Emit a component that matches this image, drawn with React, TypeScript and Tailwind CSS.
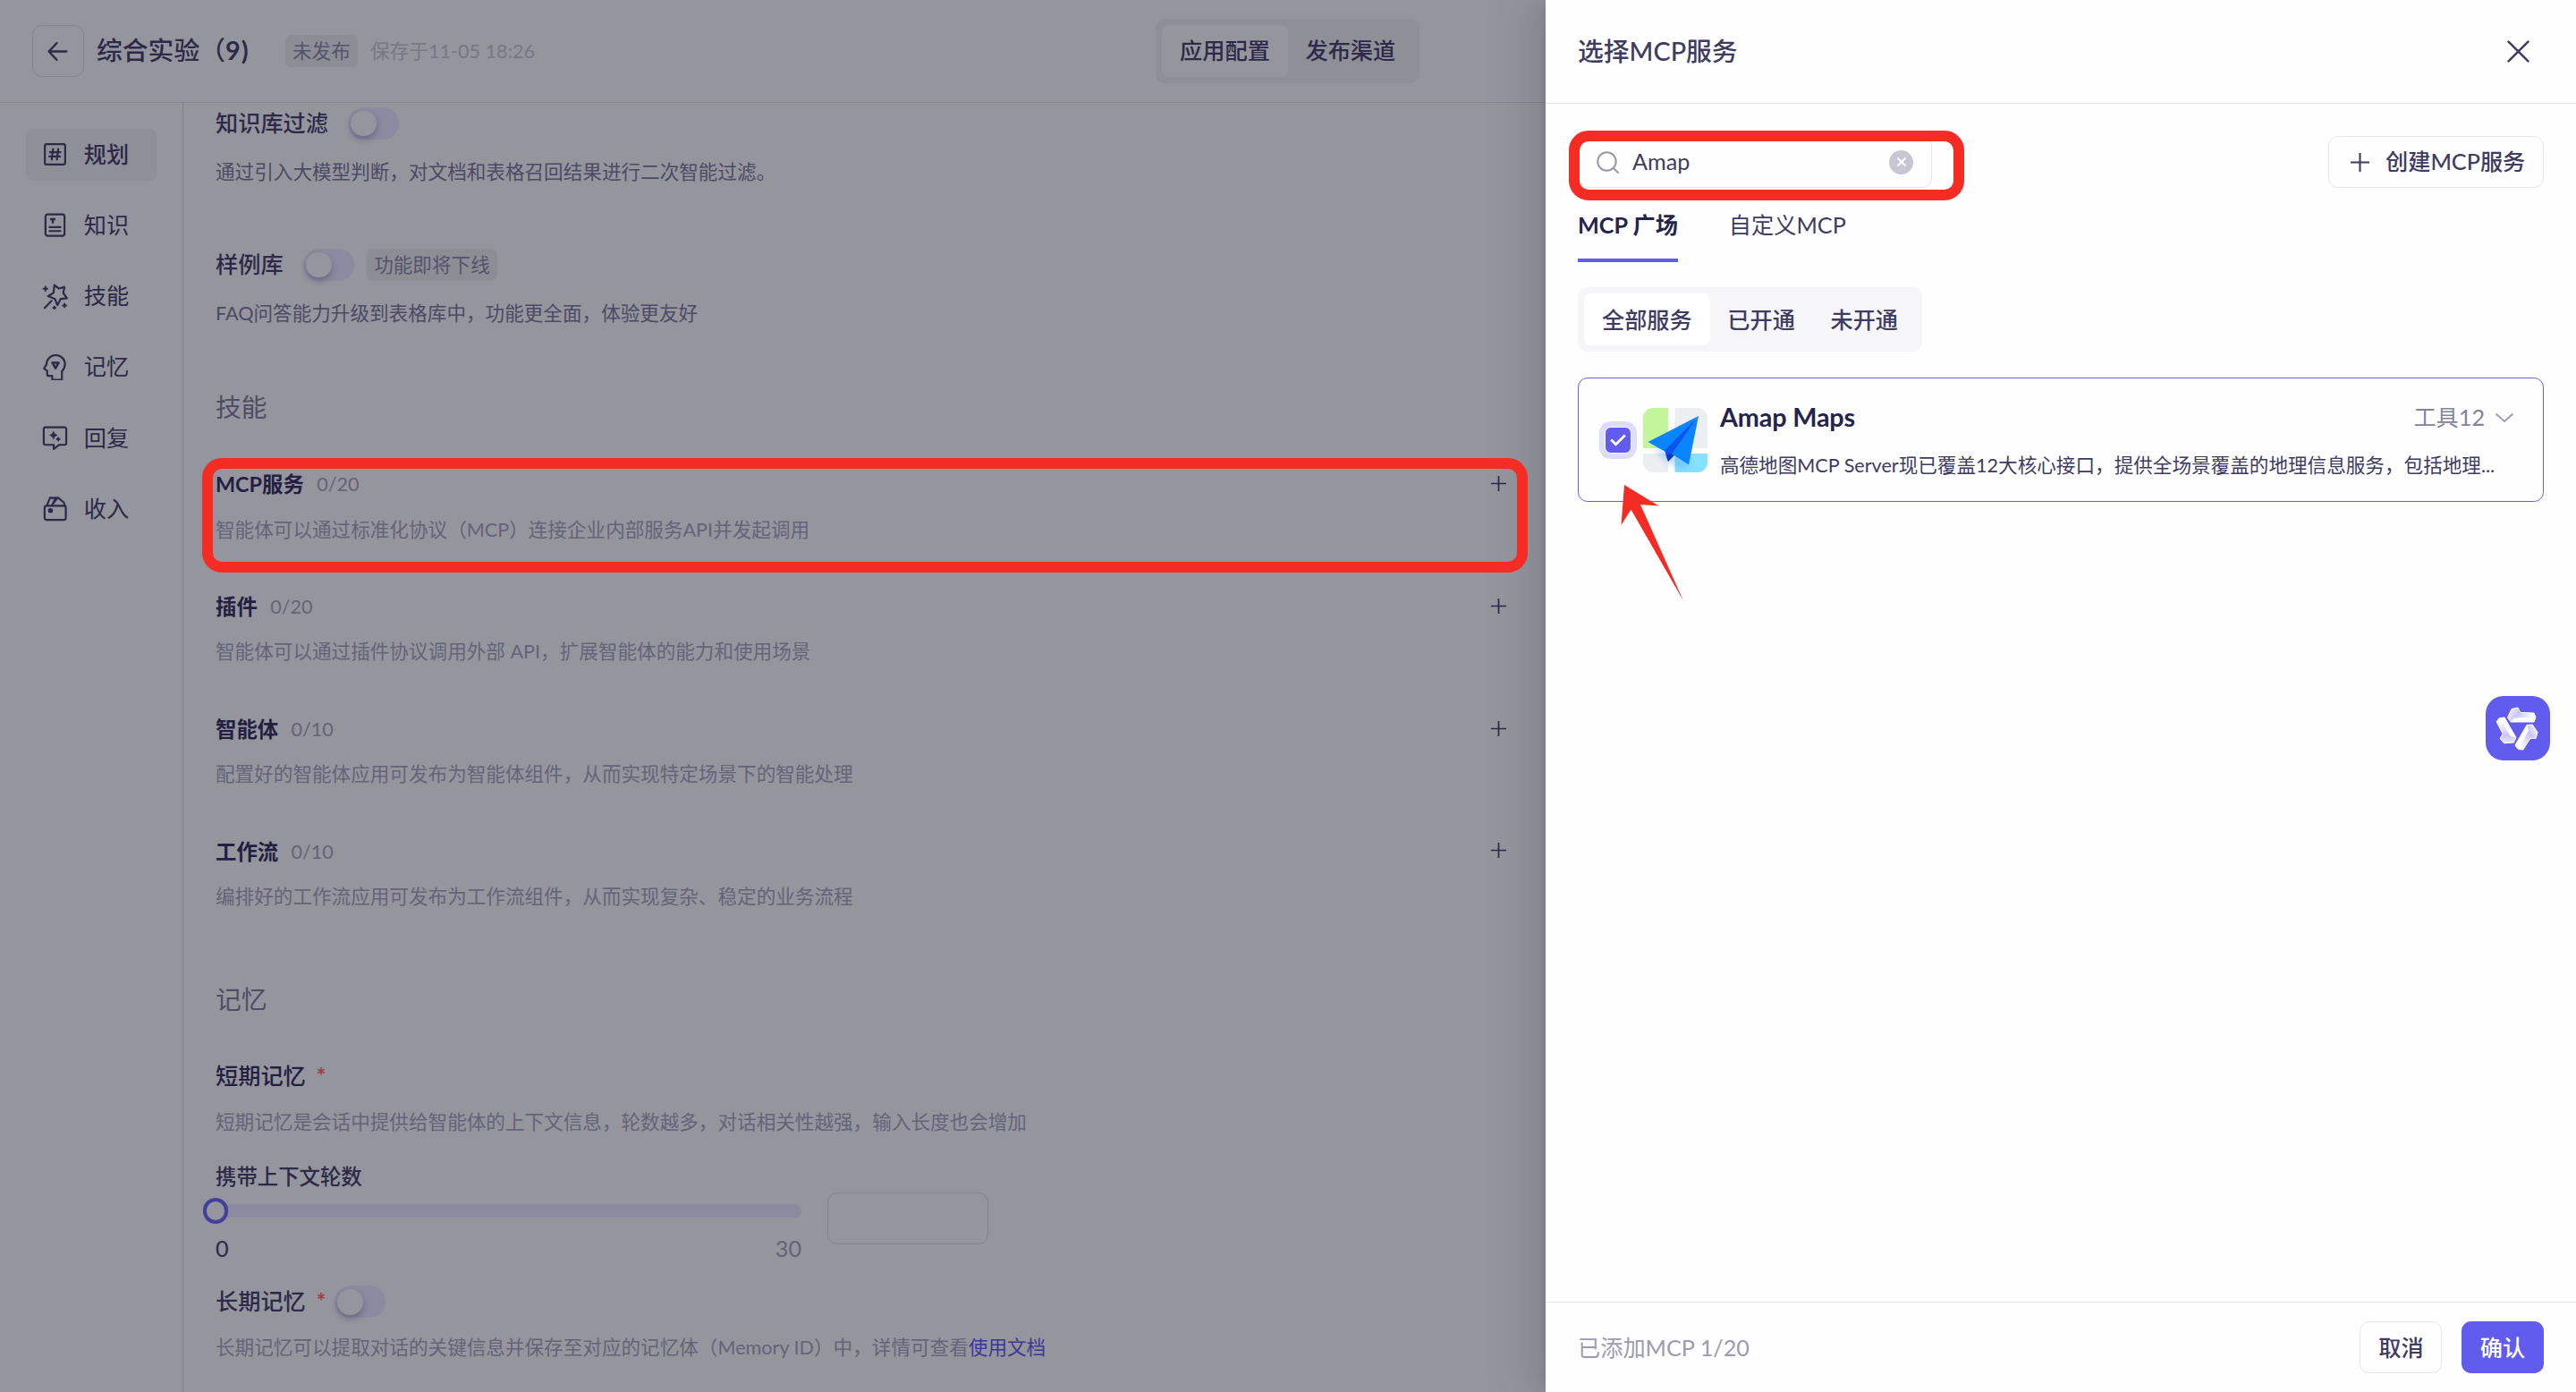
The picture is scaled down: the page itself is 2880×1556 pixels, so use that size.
import React from 'react';
import clsx from 'clsx';

// Sidebar icons, all on a 24 grid
const iconProps = {
  viewBox: '0 0 24 24',
  fill: 'none',
  stroke: 'currentColor',
  strokeWidth: 1.8,
  strokeLinecap: 'round' as const,
  strokeLinejoin: 'round' as const,
  className: 'size-[29px] shrink-0',
};

const PlanIcon = () => (
  <svg {...iconProps}>
    <rect x="2.6" y="2.6" width="18.8" height="18.8" rx="1.6" />
    <path d="M10.2 7.2 9 16.8M15 7.2l-1.2 9.6M7.2 10h9.8M6.8 14h9.8" />
  </svg>
);

const KnowledgeIcon = () => (
  <svg {...iconProps}>
    <rect x="3.2" y="2.2" width="17.6" height="19.8" rx="2" />
    <path d="M7.4 6.6h5M9.9 6.6v4" strokeWidth={2} strokeLinecap="butt" />
    <path d="M7 14h10M7 17.6h10" />
  </svg>
);

const SkillIcon = () => (
  <svg {...iconProps}>
    <path d="m11.4 1.400 4.200 3.200 5.200-1.400-1.200 5.400 3.400 5-5.800.6-3 5.800-2.200-5.800L5.600 11.600l5-3z" />
    <path d="m8.800 16-6.400 6.600" />
    <path d="M3.200 3v3.600M1.400 4.800h3.600M20.800 18.600v3.200M19.200 20.200h3.200M11.400 21.400v2M10.400 22.400h2" strokeWidth={1.7} />
  </svg>
);

const MemoryIcon = () => (
  <svg {...iconProps}>
    <path d="M18.4 23.6H9.400v-3.600H5.800a1 1 0 0 1-1-1v-3.600L1.800 13.200l2.200-3.600C4.200 4.400 8 .8 12.600.8c4.900 0 8.600 3.600 8.600 8.400 0 3.200-1.200 5-2.800 6.600z" />
    <path d="M9.600 7.800h5.800L12.500 13z" strokeWidth={2.100} />
  </svg>
);

const ReplyIcon = () => (
  <svg {...iconProps}>
    <path d="M3 2.200h18a1.400 1.400 0 0 1 1.400 1.400v13.400a1.400 1.400 0 0 1-1.400 1.400h-5l-5.200 3.800v-3.800H3a1.400 1.400 0 0 1-1.400-1.400V3.600A1.400 1.400 0 0 1 3 2.200z" />
    <path d="M10.600 6.200c.3 2.200 1 2.900 3.200 3.300-2.200.4-2.900 1.100-3.200 3.300-.3-2.200-1-2.900-3.200-3.300 2.200-.4 2.900-1.100 3.200-3.300zM15 11.400c.2 1.200.5 1.500 1.700 1.700-1.200.2-1.500.5-1.700 1.700-.2-1.200-.5-1.500-1.700-1.700 1.200-.2 1.500-.5 1.700-1.700z" fill="currentColor" strokeWidth={1} />
  </svg>
);

const IncomeIcon = () => (
  <svg {...iconProps}>
    <rect x="2.400" y="9.400" width="19.600" height="13" rx="1.800" />
    <path d="m4.600 9 2.800-7 4.200.2M9 9l5.600-7.200L20.200 6.400l1 3.200M9.200 9l3.600-7.200" />
    <circle cx="7.800" cy="13.800" r="1.400" fill="currentColor" />
  </svg>
);

const menu = [
  { label: '规划', icon: PlanIcon, active: true },
  { label: '知识', icon: KnowledgeIcon },
  { label: '技能', icon: SkillIcon },
  { label: '记忆', icon: MemoryIcon },
  { label: '回复', icon: ReplyIcon },
  { label: '收入', icon: IncomeIcon },
];

const skills = [
  { name: 'MCP服务', count: '0/20', desc: '智能体可以通过标准化协议（MCP）连接企业内部服务API并发起调用' },
  { name: '插件', count: '0/20', desc: '智能体可以通过插件协议调用外部 API，扩展智能体的能力和使用场景' },
  { name: '智能体', count: '0/10', desc: '配置好的智能体应用可发布为智能体组件，从而实现特定场景下的智能处理' },
  { name: '工作流', count: '0/10', desc: '编排好的工作流应用可发布为工作流组件，从而实现复杂、稳定的业务流程' },
];

function Toggle() {
  return (
    <span className="flex h-9 w-[57.6px] shrink-0 items-center rounded-full bg-[#8c8aa0] pl-[3.6px]">
      <span className="size-[28.8px] rounded-full bg-[#95959e] shadow-[0_4px_7px_rgba(30,28,70,0.3)]" />
    </span>
  );
}

function Plus({ className }: { className?: string }) {
  return (
    <svg viewBox="0 0 20 20" fill="none" stroke="currentColor" strokeWidth="2" className={clsx('shrink-0', className)}>
      <path d="M10 0v20M0 10h20" />
    </svg>
  );
}

function Tag({ children }: { children: React.ReactNode }) {
  return (
    <span className="flex h-9 items-center rounded-[7px] bg-[#8d8d96] px-2 text-[21.6px] text-[#55536c]">{children}</span>
  );
}

function AmapLogo() {
  return (
    <svg viewBox="0 0 72 72" className="size-[72px] shrink-0">
      <defs>
        <clipPath id="amap-clip">
          <rect width="72" height="72" rx="11" />
        </clipPath>
        <filter id="amap-blur">
          <feGaussianBlur stdDeviation="3" />
        </filter>
      </defs>
      <g clipPath="url(#amap-clip)">
        <rect width="72" height="72" fill="#ffffff" />
        <rect width="28" height="45" fill="#c3f59b" />
        <rect x="35.500" width="37" height="45" fill="#eceff1" />
        <rect y="51" width="28" height="21" fill="#eceff1" />
        <rect x="35.500" y="51" width="37" height="21" fill="#86e0ff" />
        <path d="M10 44 30 50l24 14-10 4-18-8z" fill="#5f9fe8" opacity="0.4" filter="url(#amap-blur)" />
      </g>
      <path d="M62 9 5.500 38 24 48.500z" fill="#0a84ff" />
      <path d="M62 9 31.500 51 51 63.500z" fill="#0a84ff" />
      <path d="M62 9 24 47.500 28 60 32 51.500z" fill="#0a55f0" />
      <path d="m28 60-2.500-8L31.500 51l3.500 2z" fill="#0838c8" />
    </svg>
  );
}

function AssistantLogo() {
  return (
    <svg viewBox="0 0 72 72" className="size-[72px]">
      <defs>
        <linearGradient id="blade" x1="0" y1="0" x2="1" y2="0.300">
          <stop offset="0" stopColor="#ffffff" />
          <stop offset="0.450" stopColor="#c9c5f7" />
          <stop offset="1" stopColor="#ffffff" />
        </linearGradient>
      </defs>
      {[0, 120, 240].map((deg) => (
        <g key={deg} transform={`rotate(${deg} 36 36)`}>
          <path d="M24.500 24 29 14.500 36 13l3 5.400 15 .6 2 4.700-2 5.300H28z" fill="url(#blade)" stroke="#fff" strokeWidth="1" strokeLinejoin="round" />
          <path d="m28 29 4-4.500 23.600-.4L54 29z" fill="#ffffff" />
        </g>
      ))}
    </svg>
  );
}

function TopBar() {
  return (
    <header className="flex h-[115px] items-center border-b border-[#83839a] pl-9">
      <button className="flex size-[57.6px] items-center justify-center rounded-[10.8px] border border-[#85858f]">
        <svg viewBox="0 0 24 24" fill="none" stroke="currentColor" strokeWidth="2.200" strokeLinecap="round" strokeLinejoin="round" className="size-[25px]">
          <path d="M21.500 12H2.800M11 3 2.500 12l8.500 9" />
        </svg>
      </button>
      <h1 className="ml-[14.400px] w-[211px] whitespace-nowrap text-[28.8px] font-medium">
        综合实验（<span className="font-bold tracking-[1px]">9)</span>
      </h1>
      <Tag>未发布</Tag>
      <span className="ml-[14.400px] text-[21.6px] text-[#777786]">保存于11-05 18:26</span>
      <div className="ml-[694px] flex h-[72px] items-center rounded-[10.8px] bg-[#8f8f98] px-[7.2px] text-[25.2px] font-medium">
        <span className="flex h-[57.6px] items-center rounded-[8px] bg-[#95959e] px-[19.8px]">应用配置</span>
        <span className="px-[19.8px]">发布渠道</span>
      </div>
    </header>
  );
}

function SideMenu() {
  return (
    <nav className="flex w-[205px] shrink-0 flex-col gap-[21.6px] border-r border-[#83838f] pl-[28.8px] pt-[29px]">
      {menu.map(({ label, icon: Icon, active }) => (
        <div
          key={label}
          className={clsx(
            'flex h-[57.6px] w-[146px] items-center gap-[18px] rounded-[8px] pl-[18px] text-[25.2px]',
            active && 'bg-[#8f8f98] font-medium'
          )}
        >
          <Icon />
          {label}
        </div>
      ))}
    </nav>
  );
}

function Config() {
  return (
    <section className="flex grow flex-col overflow-hidden pl-[36px] pr-[44px] pt-[5px] text-[21.6px] text-[#656379]">
      <div className="flex h-9 items-center gap-[21.6px] text-[25.2px] font-medium text-[#2c2949]">
        知识库过滤
        <Toggle />
      </div>
      <p className="mt-[18px] h-9 leading-9 text-[#4c4a65]">通过引入大模型判断，对文档和表格召回结果进行二次智能过滤。</p>

      <div className="mt-[68px] flex h-9 items-center text-[25.2px] font-medium text-[#2c2949]">
        <span className="mr-[22px]">样例库</span>
        <Toggle />
        <span className="ml-[14px] font-normal"><Tag>功能即将下线</Tag></span>
      </div>
      <p className="mt-[18px] h-9 leading-9 text-[#4c4a65]">FAQ问答能力升级到表格库中，功能更全面，体验更友好</p>

      <h2 className="mb-[49px] mt-[67px] h-10 text-[28.8px] leading-10 text-[#4f4d67]">技能</h2>

      {skills.map((item) => (
        <div key={item.name} className="h-[136.800px] shrink-0">
          <div className="flex h-9 items-center">
            <span className="text-[23.4px] font-bold text-[#231f42]">{item.name}</span>
            <span className="-mt-px ml-[14.400px]">{item.count}</span>
            <Plus className="mb-[3px] ml-auto size-[17px] text-[#2c2949]" />
          </div>
          <p className="mt-[13.500px] h-9 leading-9">{item.desc}</p>
        </div>
      ))}

      <h2 className="mt-[26px] h-10 text-[28.8px] leading-10 text-[#4f4d67]">记忆</h2>

      <div className="mt-12 flex h-9 items-center text-[25.2px] font-medium text-[#231f42]">
        短期记忆
        <span className="ml-[12px] w-[9px] text-[25.2px] font-bold text-[#a23a48]">*</span>
      </div>
      <p className="mt-[15px] h-9 leading-9">短期记忆是会话中提供给智能体的上下文信息，轮数越多，对话相关性越强，输入长度也会增加</p>

      <div className="mt-[25px] h-9 text-[23.4px] font-medium leading-9 text-[#2c2949]">携带上下文轮数</div>
      <div className="flex h-[104px] gap-[29px]">
        <div className="w-[655px] pt-[13px]">
          <div className="relative h-[14.400px] rounded-full bg-[#8c8aa0]">
            <span className="absolute -left-[14.400px] -top-[7.2px] size-[28.8px] rounded-full border-4 border-[#42409c] bg-[#95959e]" />
          </div>
          <div className="mt-[17px] flex h-[34px] justify-between text-[25.2px] leading-[34px]">
            <span className="text-[#2c2949]">0</span>
            <span>30</span>
          </div>
        </div>
        <div className="h-[57.6px] w-[180px] rounded-[10.8px] border border-[#85858f]" />
      </div>

      <div className="flex h-9 items-center text-[25.2px] font-medium text-[#2c2949]">
        长期记忆
        <span className="ml-[12px] mr-[11px] w-[9px] text-[25.2px] font-bold text-[#a23a48]">*</span>
        <Toggle />
      </div>
      <p className="mt-[15px] h-9 whitespace-nowrap leading-9">
        长期记忆可以提取对话的关键信息并保存至对应的记忆体（Memory ID）中，详情可查看<a className="text-[#3b3894]">使用文档</a>
      </p>
    </section>
  );
}

function Drawer() {
  return (
    <aside className="relative flex h-full w-[1152px] shrink-0 flex-col bg-[#fefefe] text-[25.2px] text-[#3f3c61] shadow-[-11px_0_29px_rgba(0,0,0,0.08),-5px_0_11px_-7px_rgba(0,0,0,0.12),-16px_0_50px_14px_rgba(0,0,0,0.05)]">
      <header className="flex h-[116px] items-center justify-between border-b border-[#e6e6e9] pl-9 pr-[52px]">
        <h2 className="text-[28.8px] font-medium">选择MCP服务</h2>
        <svg viewBox="0 0 24 24" fill="none" stroke="currentColor" strokeWidth="2.400" strokeLinecap="round" className="size-[25px]">
          <path d="m1.500 1.500 21 21M22.500 1.500l-21 21" />
        </svg>
      </header>

      <main className="grow px-9 pt-9">
        <div className="flex justify-between">
          <div className="flex h-[58px] w-[396px] items-center rounded-[10.8px] border border-[#e6e6ee] pl-5 pr-5">
            <svg viewBox="0 0 24 24" fill="none" stroke="#9a98ad" strokeWidth="2" strokeLinecap="round" className="size-[25px]">
              <circle cx="11" cy="11" r="9.800" />
              <path d="m18.500 18.500 4.500 4.500" />
            </svg>
            <span className="ml-[15px] grow">Amap</span>
            <span className="flex size-[27px] items-center justify-center rounded-full bg-[#c8c6d2]">
              <svg viewBox="0 0 10 10" stroke="#fff" strokeWidth="2" className="size-[10px]">
                <path d="m.5.5 9 9M9.500.5l-9 9" />
              </svg>
            </span>
          </div>
          <button className="flex h-[58px] w-[241px] items-center rounded-[10.8px] border border-[#e6e6ee] pl-6 font-medium">
            <Plus className="mr-[18px] size-[21px]" />
            创建MCP服务
          </button>
        </div>

        <div className="mt-[19px] flex h-[64px] gap-[58px]">
          <span className="border-b-4 border-[#615ced] font-bold leading-[44px] text-[#26244c]">MCP 广场</span>
          <span className="-ml-px leading-[44px]">自定义MCP</span>
        </div>

        <div className="mt-7 flex h-[72px] w-fit items-center rounded-[10.8px] bg-[#f6f6f9] px-[7.2px] font-medium">
          <span className="flex h-[57.6px] items-center rounded-[8px] bg-white px-[19.8px] pt-[2px]">全部服务</span>
          <span className="px-[19.8px] pt-[2px]">已开通</span>
          <span className="px-[19.8px] pt-[2px]">未开通</span>
        </div>

        <div className="mt-[29px] flex h-[139px] items-center rounded-[10.8px] border border-[#6461e8] pl-[28.500px] pr-[33px]">
          <span className="flex size-[30px] shrink-0 items-center justify-center rounded-[7px] border border-white bg-[#615ced] ring-[6px] ring-[#dfddfc]">
            <svg viewBox="0 0 18 14" fill="none" stroke="#fff" strokeWidth="2.800" className="h-[14px] w-[18px]">
              <path d="m1.200 6.500 5.300 5.300L16.800 1.500" />
            </svg>
          </span>
          <span className="ml-[13px]"><AmapLogo /></span>
          <div className="ml-[14.400px] flex min-w-0 grow flex-col pt-[2px]">
            <div className="flex h-[42px] items-center">
              <span className="text-[28.8px] font-bold tracking-[-0.15px] text-[#26244c]">Amap Maps</span>
              <span className="ml-auto text-[#85829b]">工具12</span>
              <svg viewBox="0 0 20 10" fill="none" stroke="#9a98ad" strokeWidth="1.800" strokeLinecap="round" className="ml-3 h-[10px] w-5">
                <path d="m1 1 9 8 9-8" />
              </svg>
            </div>
            <p className="mt-[13px] h-[38px] whitespace-nowrap text-[21.6px] leading-[38px]">
              高德地图MCP Server现已覆盖12大核心接口，提供全场景覆盖的地理信息服务，包括地理...
            </p>
          </div>
        </div>
      </main>

      <footer className="flex h-[101px] items-center border-t border-[#e6e6e9] px-9 font-medium">
        <span className="grow pt-[2px] font-normal text-[#9d9bb2]">已添加MCP 1/20</span>
        <button className="h-[57.6px] w-[92px] rounded-[10.8px] border border-[#e6e6ee] pt-[2px]">取消</button>
        <button className="ml-[21.6px] h-[57.6px] w-[92px] rounded-[10.8px] bg-[#615ced] pt-[2px] text-white">确认</button>
      </footer>

      {/* Floating assistant entry */}
      <div className="absolute right-[29px] top-[778px] rounded-[20px] bg-[#615ced]">
        <AssistantLogo />
      </div>
    </aside>
  );
}

export default function App() {
  return (
    <div className="relative flex h-[1556px] w-[2880px] overflow-hidden bg-[#95959e] font-['Lato','Noto_Sans_CJK_SC',sans-serif] text-[#2c2949]">
      <div className="flex w-[1728px] shrink-0 flex-col">
        <TopBar />
        <div className="flex min-h-0 grow">
          <SideMenu />
          <Config />
        </div>
      </div>
      <Drawer />

      {/* Annotations over the page */}
      <div className="absolute left-[226px] top-[512px] h-[128px] w-[1482px] rounded-[22px] border-[12px] border-[#f42c24]" />
      <div className="absolute left-[1754px] top-[146px] h-[78px] w-[442px] rounded-[22px] border-[12px] border-[#f42c24]" />
      <svg viewBox="0 0 70 130" className="absolute left-[1812px] top-[542px] h-[130px] w-[70px]">
        <path d="M4 0 42.500 23.500 22 22 70 129.500 11.500 27.500.5 45z" fill="#f42c24" />
      </svg>
    </div>
  );
}
